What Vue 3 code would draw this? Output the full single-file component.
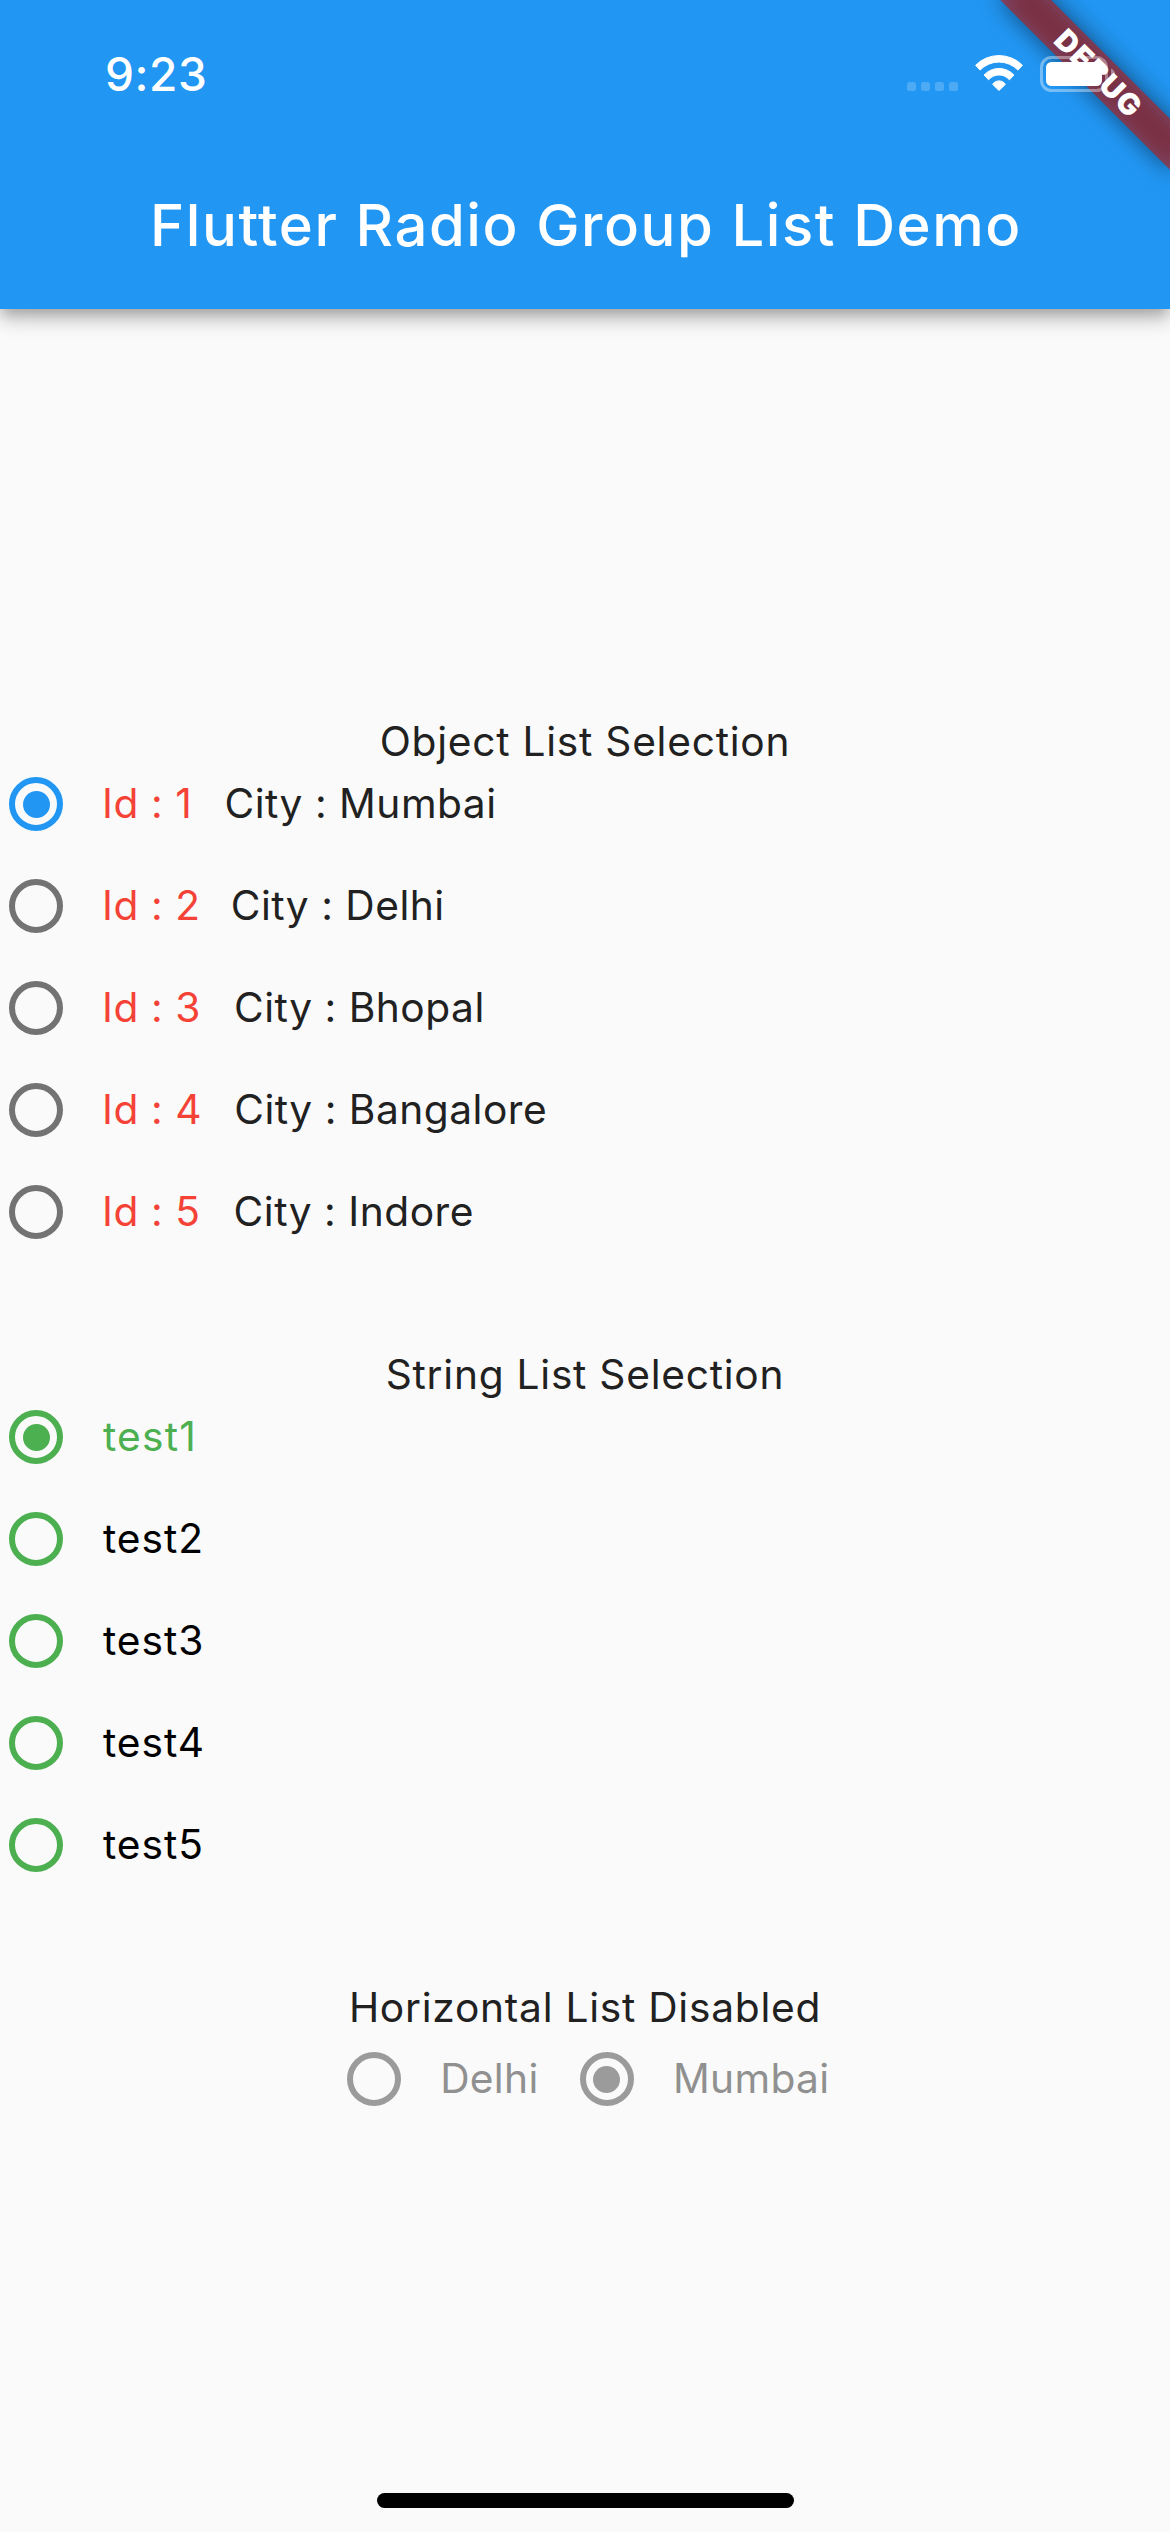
<script setup>
const cities = [
  { id: 1, name: 'Mumbai', gap: 32 },
  { id: 2, name: 'Delhi', gap: 30 },
  { id: 3, name: 'Bhopal', gap: 33 },
  { id: 4, name: 'Bangalore', gap: 32 },
  { id: 5, name: 'Indore', gap: 33 },
]
const tests = ['test1', 'test2', 'test3', 'test4', 'test5']
const disabledCities = ['Delhi', 'Mumbai']
const selectedCity = 1
const selectedTest = 'test1'
const selectedDisabled = 'Mumbai'
</script>

<template>
  <div class="screen">
    <header class="app-bar">
      <div class="status">
        <span class="time">9:23</span>
        <div class="dots"><i v-for="n in 4" :key="n"></i></div>
        <svg class="wifi" width="50" height="38" viewBox="-1 -1 50 38">
          <g transform="translate(24 33.7)" fill="#fff" stroke="#fff" stroke-width="1" stroke-linejoin="round">
            <path d="M-23.4 -23.5A33.2 33.2 0 0 1 23.4 -23.5L19 -18.6A26.5 26.5 0 0 0 -19 -18.6Z" />
            <path d="M-14.9 -13.7A20.2 20.2 0 0 1 14.9 -13.7L10.4 -8.9A13.6 13.6 0 0 0 -10.4 -8.9Z" />
            <path d="M-6.4 -4.4A7.7 7.7 0 0 1 6.4 -4.4L0 1.8Z" />
          </g>
        </svg>
        <svg class="battery" width="75" height="36" viewBox="0 0 75 36">
          <rect x="1.5" y="1.5" width="65" height="33" rx="10" fill="none" stroke="#fff" stroke-opacity=".38" stroke-width="3" />
          <path d="M71 12.5Q75 14.5 75 18Q75 21.500 71 23.500Z" fill="#fff" fill-opacity=".4" />
          <rect x="6" y="6" width="56" height="24" rx="5.500" fill="#fff" />
        </svg>
      </div>
      <h1 class="title">Flutter Radio Group List Demo</h1>
      <div class="banner"><span>DEBUG</span></div>
    </header>

    <main>
      <h2>Object List Selection</h2>
      <ul class="list">
        <li v-for="c in cities" :key="c.id">
          <span class="radio grey" :class="{ on: c.id === selectedCity, blue: c.id === selectedCity }"></span>
          <span class="id">Id : {{ c.id }}</span>
          <span class="city" :style="{ marginLeft: c.gap + 'px' }">City : {{ c.name }}</span>
        </li>
      </ul>

      <h2>String List Selection</h2>
      <ul class="list">
        <li v-for="t in tests" :key="t">
          <span class="radio green" :class="{ on: t === selectedTest }"></span>
          <span class="test" :class="{ picked: t === selectedTest }">{{ t }}</span>
        </li>
      </ul>

      <h2>Horizontal List Disabled</h2>
      <div class="row">
        <div v-for="d in disabledCities" :key="d" class="choice">
          <span class="radio faded" :class="{ on: d === selectedDisabled }"></span>
          <span class="faded-text">{{ d }}</span>
        </div>
      </div>
    </main>

    <div class="home"></div>
  </div>
</template>

<style>
body {
  margin: 0;
}
</style>

<style scoped>
.screen {
  box-sizing: border-box;
  width: 1170px;
  height: 2532px;
  display: flex;
  flex-direction: column;
  overflow: hidden;
  background: #fafafa;
  color: #212121;
  font-family: Inter, sans-serif;
}
.app-bar {
  position: relative;
  height: 309px;
  flex: none;
  background: #2196f3;
  box-shadow: 0 6px 12px -3px rgba(0, 0, 0, 0.2), 0 12px 15px rgba(0, 0, 0, 0.14), 0 3px 30px rgba(0, 0, 0, 0.12);
}
.status {
  position: relative;
  z-index: 2;
  box-sizing: border-box;
  height: 141px;
  padding: 0 55px 0 105px;
  display: flex;
  align-items: flex-start;
}
.time {
  margin-top: 44px;
  line-height: 60px;
  font-size: 46px;
  font-weight: 500;
  letter-spacing: 0.58px;
  color: #fff;
}
.dots {
  display: flex;
  gap: 5px;
  margin: 82px 16px 0 auto;
}
.dots i {
  width: 9px;
  height: 9px;
  border-radius: 2.5px;
  background: rgba(255, 255, 255, 0.2);
}
.wifi {
  margin-top: 54px;
}
.battery {
  margin: 56px 0 0 16px;
}
.title {
  margin: 0;
  height: 168px;
  line-height: 168px;
  padding-left: 2px;
  text-align: center;
  font-size: 58px;
  font-weight: 500;
  letter-spacing: 1.57px;
  color: #fff;
}
.banner {
  position: absolute;
  z-index: 1;
  top: 84px;
  right: -120px;
  width: 240px;
  height: 36px;
  transform-origin: 120px -84px;
  transform: rotate(45deg);
}
.banner::before {
  content: '';
  position: absolute;
  inset: 0;
  background: rgba(0, 0, 0, 0.5);
  filter: blur(12px);
}
.banner span {
  position: absolute;
  inset: 0;
  background: rgba(183, 28, 28, 0.627);
  color: #fff;
  text-align: center;
  text-indent: 3px;
  line-height: 36px;
  font-size: 29.7px;
  font-weight: 900;
  letter-spacing: 1.4px;
}
main {
  flex: 1;
  padding-top: 407px;
  font-feature-settings: 'calt' 0;
  font-size: 40.7px;
  line-height: 54px;
}
h2 {
  margin: 0;
  height: 50px;
  line-height: 52px;
  text-align: center;
  font-size: 40.7px;
  font-weight: 400;
  letter-spacing: 0.74px;
}
.list {
  list-style: none;
  margin: 11px 0 110px;
  padding: 0;
  display: flex;
  flex-direction: column;
  gap: 48px;
}
li {
  display: flex;
  height: 54px;
  padding-left: 9px;
  line-height: 54px;
  white-space: pre;
}
.radio {
  box-sizing: border-box;
  flex: none;
  width: 54px;
  height: 54px;
  margin-right: 39px;
  border: 6px solid currentColor;
  border-radius: 50%;
  display: flex;
  align-items: center;
  justify-content: center;
}
.radio.on::after {
  content: '';
  width: 27px;
  height: 27px;
  border-radius: 50%;
  background: currentColor;
}
.grey {
  color: #737373;
}
.blue {
  color: #2196f3;
}
.green {
  color: #4caf50;
}
.faded {
  color: #9b9b9b;
}
.id {
  color: #f44336;
  letter-spacing: 0.57px;
}
.city {
  letter-spacing: 0.5px;
}
.test {
  margin-left: 1px;
  color: #000;
  letter-spacing: 0.95px;
}
.picked {
  color: #4caf50;
  letter-spacing: 1.2px;
}
.row {
  display: flex;
  justify-content: center;
  gap: 41px;
  margin-top: 20px;
  padding-left: 6px;
}
.choice {
  display: flex;
  line-height: 54px;
}
.faded-text {
  margin-left: 0.5px;
  color: #909090;
  font-weight: 400;
  letter-spacing: 0.3px;
}
.home {
  flex: none;
  align-self: center;
  width: 417px;
  height: 15px;
  margin-bottom: 24px;
  border-radius: 8px;
  background: #000;
}
</style>
